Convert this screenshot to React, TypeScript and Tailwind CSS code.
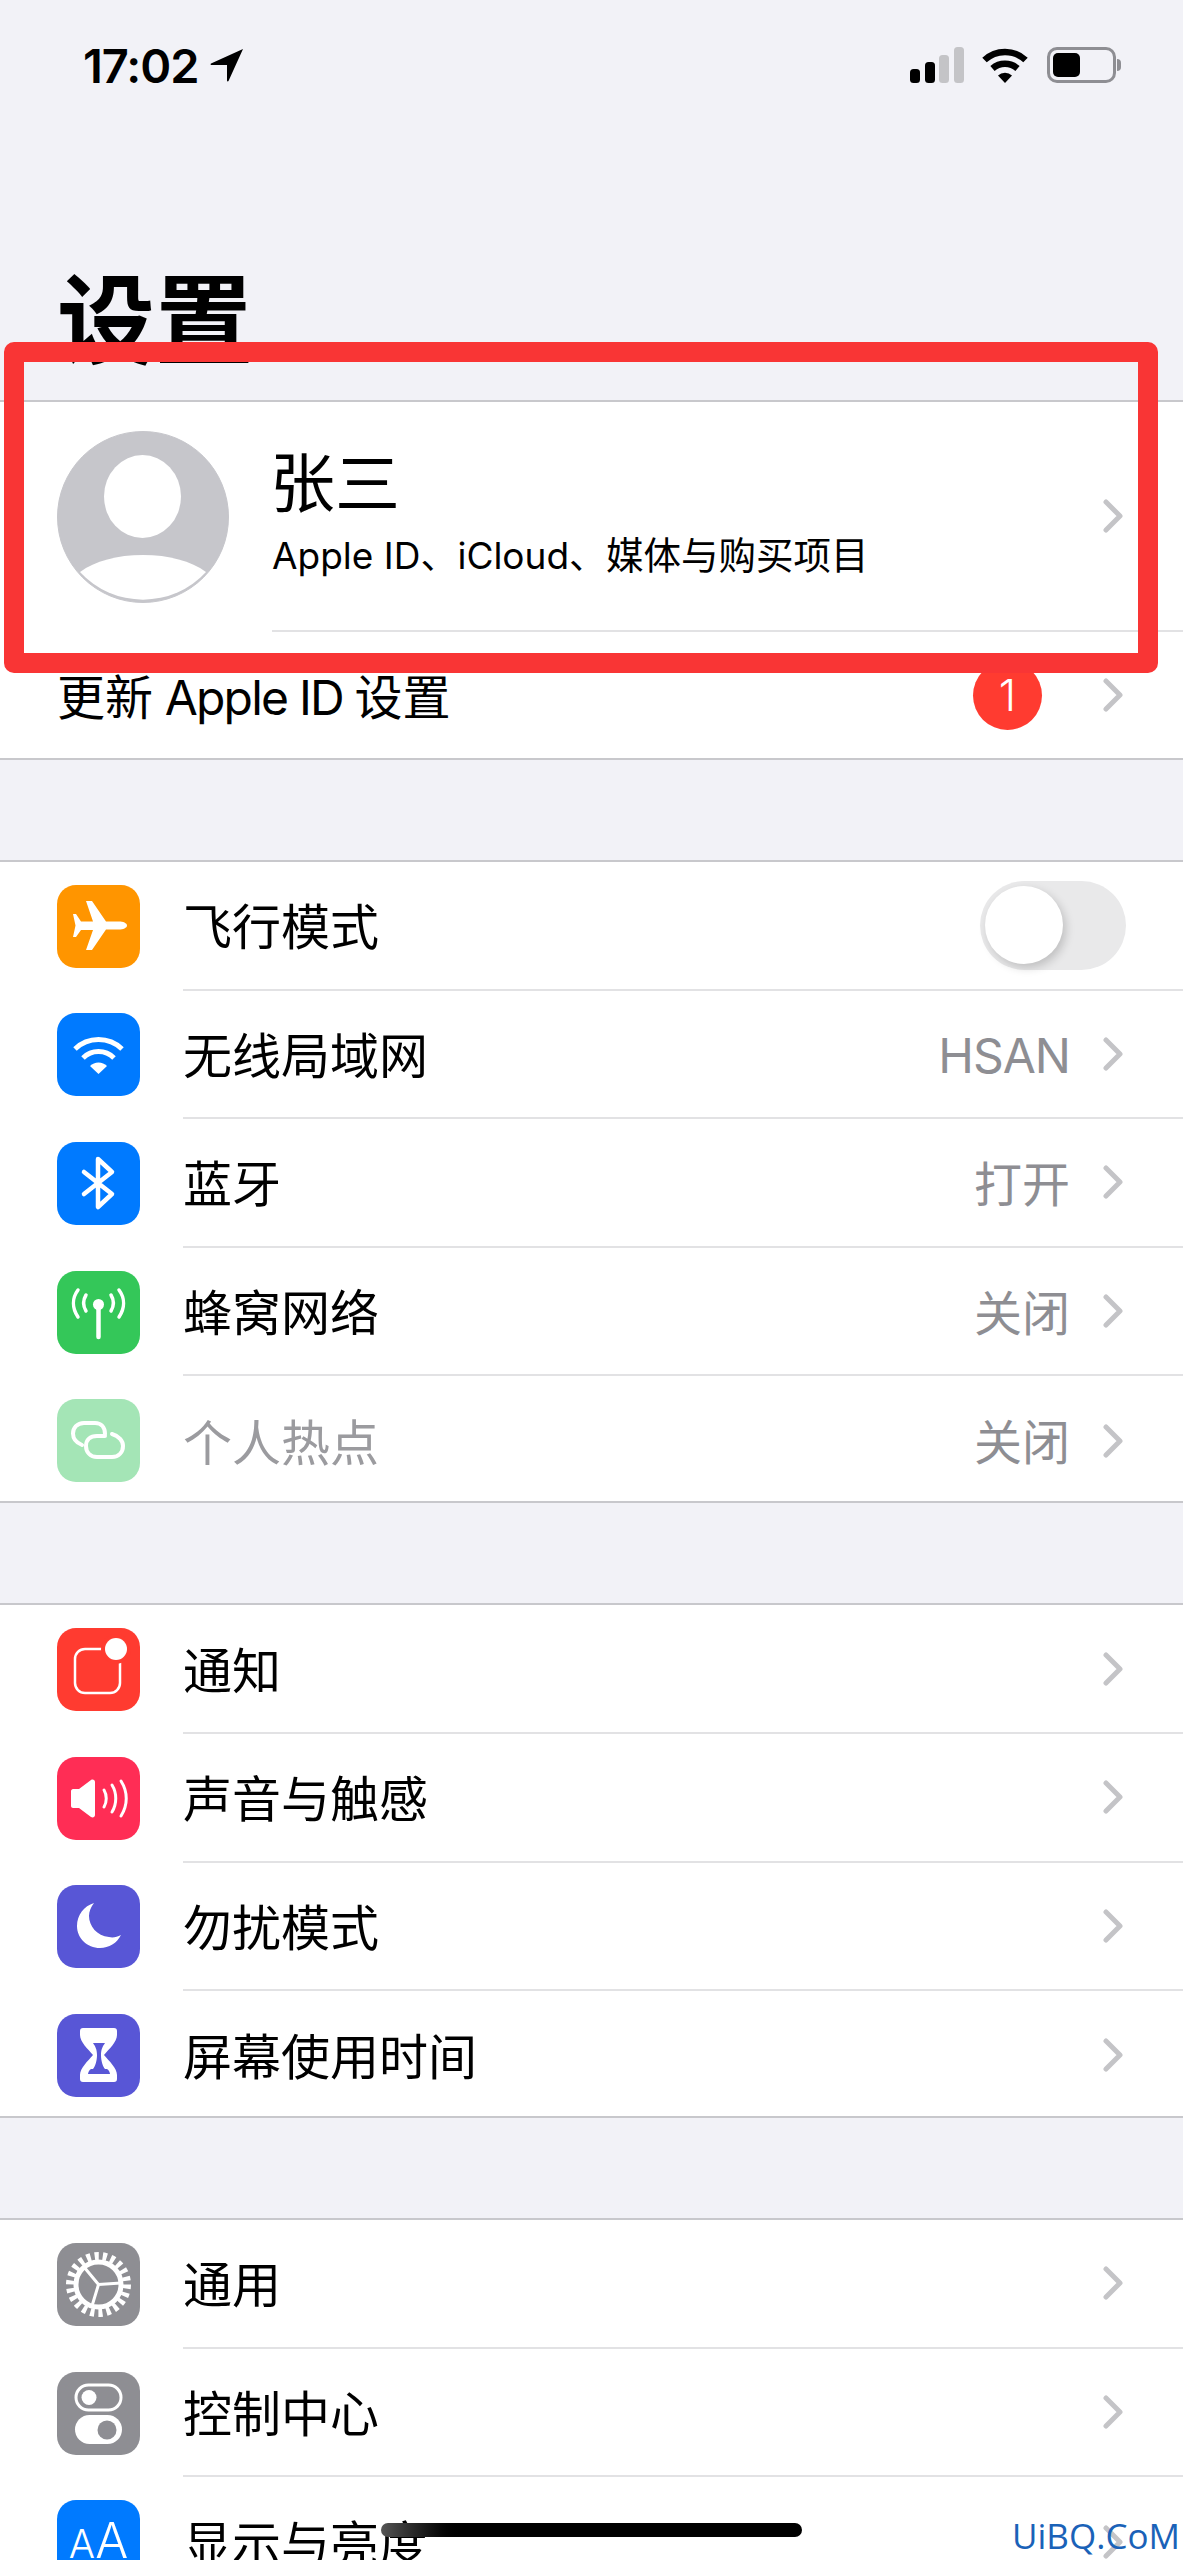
import type { ReactNode } from "react";

function Chevron({ wide }: { wide?: boolean }) {
  return (
    <svg width="20" height="34" viewBox="0 0 20 34" className={wide ? "ml-[61px]" : "ml-[33px]"}>
      <path d="M3 3l14 14L3 31" fill="none" stroke="#c4c4c7" strokeWidth="5" strokeLinecap="round" strokeLinejoin="round" />
    </svg>
  );
}

function IconBox({ color, children }: { color: string; children: ReactNode }) {
  return (
    <div className={`h-[83px] w-[83px] shrink-0 overflow-hidden rounded-[19px] ${color}`}>
      <svg width="83" height="83" viewBox="0 0 83 83">
        {children}
      </svg>
    </div>
  );
}

function Row({
  icon,
  label,
  value,
  last,
  dim,
  right,
}: {
  icon: ReactNode;
  label: string;
  value?: string;
  last?: boolean;
  dim?: boolean;
  right?: ReactNode;
}) {
  return (
    <div className={last ? "h-[125px]" : "h-[128.6px]"}>
      <div className="flex h-[128.6px] items-center pl-[57px]">
        {icon}
        <div className={`ml-[43px] flex h-full flex-1 items-center pr-[60px] ${last ? "" : "border-b-2 border-[#e2e2e4]"}`}>
          <span className={`flex-1 pt-[5px] text-[49px] leading-none ${dim ? "text-[#9b9b9f]" : "text-black"}`}>{label}</span>
          {right ?? (
            <>
              {value && (
                <span className={`pt-[5px] text-[48px] leading-none text-[#8e8e93] ${value === "HSAN" ? "tracking-[-1px]" : ""}`}>{value}</span>
              )}
              <Chevron />
            </>
          )}
        </div>
      </div>
    </div>
  );
}

function Group({ children }: { children: ReactNode }) {
  return (
    <div className="mt-[100px] border-y-2 border-[#c8c8cc] bg-white">
      {children}
    </div>
  );
}

const white = { fill: "none", stroke: "#fff", strokeLinecap: "round" as const };

export default function App() {
  return (
    <div className="relative h-[2560px] w-[1183px] overflow-hidden bg-[#f2f2f7] font-['Inter','Noto_Sans_CJK_SC',sans-serif]">
      {/* status bar + title */}
      <div className="h-[400px] pt-[44px]">
        <div className="flex h-[42px] items-center pl-[83px] pr-[62px]">
          <span className="text-[47px] font-semibold leading-none tracking-[-1px] text-black">17:02</span>
          <svg width="34" height="34" viewBox="0 0 34 34" className="ml-[11px]">
            <path d="M33 1L1 15.5c-.8.4-.5 1.500.4 1.500H17v15.600c0 .9 1.100 1.200 1.500.4L33 1z" fill="#000" />
          </svg>
          <div className="flex-1" />
          <svg width="54" height="36" viewBox="0 0 54 36">
            <rect x="0" y="22" width="10" height="14" rx="3.5" fill="#000" />
            <rect x="15" y="15" width="10" height="21" rx="3.5" fill="#000" />
            <rect x="29" y="8" width="10" height="28" rx="3.5" fill="#c4c4c7" />
            <rect x="44" y="0" width="10" height="36" rx="3.5" fill="#c4c4c7" />
          </svg>
          <svg width="46" height="36" viewBox="0 0 46 36" className="ml-[18px]">
            <path d="M2.500 13a30 30 0 0 1 41 0" fill="none" stroke="#000" strokeWidth="6.5" />
            <path d="M10.500 21.500a19 19 0 0 1 25 0" fill="none" stroke="#000" strokeWidth="6.5" />
            <path d="M16 28.500a10 10 0 0 1 14 0L23 36z" fill="#000" />
          </svg>
          <div className="ml-[19px] flex items-center">
            <div className="h-[36px] w-[69px] rounded-[10px] border-[3px] border-[#8e8e93] p-[3px]">
              <div className="h-full w-[27px] rounded-[5px] bg-black" />
            </div>
            <div className="ml-[1px] h-[12px] w-[4px] rounded-r-full bg-[#8e8e93]" />
          </div>
        </div>
        <h1 className="ml-[57px] mt-[186px] text-[98px] font-bold leading-[98px] text-black">设置</h1>
      </div>

      {/* apple id */}
      <div className="border-y-2 border-[#c8c8cc] bg-white">
        <div className="flex h-[230px] items-center pl-[57px]">
          <svg width="172" height="172" viewBox="0 0 172 172" className="shrink-0">
            <circle cx="86" cy="86" r="85.5" fill="#c6c6cb" />
            <ellipse cx="85.500" cy="65.500" rx="38.500" ry="41.500" fill="#fff" />
            <path d="M23 141C38 130 60 124 86 124s48 6 63 17A85.500 85.500 0 0 1 23 141z" fill="#fff" />
            <circle cx="86" cy="86" r="85.5" fill="none" stroke="#c6c6cb" strokeWidth="1" />
          </svg>
          <div className="ml-[43px] flex h-full flex-1 items-center border-b-2 border-[#e2e2e4] pr-[60px]">
            <div className="flex-1 pb-[7px]">
              <div className="ml-[-2px] text-[65px] leading-[72px] text-black">张三</div>
              <div className="mt-[14px] text-[37px] leading-[44px] text-black">
                Apple ID、iCloud、<span className="text-[37.500px]">媒体与购买项目</span>
              </div>
            </div>
            <Chevron />
          </div>
        </div>
        <div className="flex h-[126px] items-center pl-[57px] pr-[60px]">
          <span className="flex-1 pt-[5px] text-[48px] leading-none text-black">
            更新<span className="tracking-[-1.800px]"> Apple ID </span>设置
          </span>
          <span className="flex h-[69px] w-[69px] items-center justify-center rounded-full bg-[#ff3b30] text-[44px] font-light leading-none text-white">1</span>
          <Chevron wide />
        </div>
      </div>

      <Group>
        <Row
          label="飞行模式"
          icon={
            <IconBox color="bg-[#ff9500]">
              <path d="M70 40.5c0-2.5-4-4-8-4H49L35 16h-6l7 20.5H24L19 29h-3l2.5 11.5L16 52h3l5-7h12l-7 20h6l14-20.5h13c4 0 8-1.500 8-4z" fill="#fff" />
            </IconBox>
          }
          right={
            <div className="relative mr-[-3px] h-[89px] w-[146px] rounded-full bg-[#e9e9ea]">
              <div className="absolute left-[5px] top-[5px] h-[78px] w-[78px] rounded-full bg-white shadow-[3px_4px_10px_rgba(0,0,0,0.18)]" />
            </div>
          }
        />
        <Row
          label="无线局域网"
          value="HSAN"
          icon={
            <IconBox color="bg-[#007aff]">
              <path d="M18 36a34 34 0 0 1 47 0" fill="none" stroke="#fff" strokeWidth="5" />
              <path d="M26 45a22 22 0 0 1 31 0" fill="none" stroke="#fff" strokeWidth="5" />
              <path d="M33 53a12 12 0 0 1 17 0l-8.500 8z" fill="#fff" />
            </IconBox>
          }
        />
        <Row
          label="蓝牙"
          value="打开"
          icon={
            <IconBox color="bg-[#007aff]">
              <path d="M27 30l28 22-14 13V17l14 13-28 22" {...white} strokeWidth="4.5" strokeLinejoin="round" />
            </IconBox>
          }
        />
        <Row
          label="蜂窝网络"
          value="关闭"
          icon={
            <IconBox color="bg-[#34c759]">
              <circle cx="41.5" cy="33.500" r="5.500" fill="#fff" />
              <path d="M41.500 36v30" {...white} strokeWidth="4.500" />
              <path d="M21 19c-6 8-6 18 0 27M29 24c-3 5-3 11 0 16M62 19c6 8 6 18 0 27M54 24c3 5 3 11 0 16" {...white} strokeWidth="3.500" />
            </IconBox>
          }
        />
        <Row
          last
          dim
          label="个人热点"
          value="关闭"
          icon={
            <IconBox color="bg-[#a4e5b6]">
              <path d="M48 35c0-7-4-11-10-11H27c-7 0-11 5-11 10.500S20 44 25 46" {...white} strokeWidth="4" />
              <path d="M55 35c7 2 11 7 11 12 0 6-4 11-11 11H40c-7 0-11-5-11-11s4-10 11-10h8" {...white} strokeWidth="4" />
            </IconBox>
          }
        />
      </Group>

      <Group>
        <Row
          label="通知"
          icon={
            <IconBox color="bg-[#ff3b30]">
              <rect x="18" y="21" width="45" height="44" rx="10" {...white} strokeWidth="2.500" />
              <circle cx="59" cy="21" r="15" fill="#ff3b30" />
              <circle cx="59" cy="21" r="11" fill="#fff" />
            </IconBox>
          }
        />
        <Row
          label="声音与触感"
          icon={
            <IconBox color="bg-[#ff2d55]">
              <path d="M14 34c0-1 1-2 2-2h6l12-9c2-1 4 0 4 2v33c0 2-2 3-4 2l-12-9h-6c-1 0-2-1-2-2V34z" fill="#fff" />
              <path d="M47 33c3 5 3 12 0 17M55 28c5 8 5 19 0 27M64 24c7 11 7 24 0 35" {...white} strokeWidth="3" />
            </IconBox>
          }
        />
        <Row
          label="勿扰模式"
          icon={
            <IconBox color="bg-[#5856d6]">
              <path d="M37 18C27 21 20 30 20 41c0 12 10 22 23 22 9 0 17-5 21-13-4 2-8 3-12 2-12-1-20-11-20-21 0-5 2-9 5-13z" fill="#fff" />
            </IconBox>
          }
        />
        <Row
          last
          label="屏幕使用时间"
          icon={
            <IconBox color="bg-[#5856d6]">
              <path d="M26 14h31c2 0 3 1 3 3v4c0 7-8 14-13 20 5 6 13 13 13 20v4c0 2-1 3-3 3H26c-2 0-3-1-3-3v-4c0-7 8-14 13-20-5-6-13-13-13-20v-4c0-2 1-3 3-3z" fill="#fff" />
              <path d="M36 29h12c-2 3-4 6-4 12s2 12 4 14h2c2 1 3 4 3 5H31c0-1 1-4 3-5h2c2-2 4-8 4-14s-2-9-4-12z" fill="#5856d6" />
            </IconBox>
          }
        />
      </Group>

      <Group>
        <Row
          label="通用"
          icon={
            <IconBox color="bg-[#8e8e93]">
              <circle cx="41.500" cy="41.500" r="28.500" fill="none" stroke="#fff" strokeWidth="8" strokeDasharray="4.100 4.040" />
              <circle cx="41.500" cy="41.500" r="22.500" fill="none" stroke="#fff" strokeWidth="5" />
              <path d="M41.500 41.500L27 24M41.500 41.500L64 40M41.500 41.500L35 63" {...white} strokeWidth="3" />
            </IconBox>
          }
        />
        <Row
          label="控制中心"
          icon={
            <IconBox color="bg-[#8e8e93]">
              <rect x="19" y="13" width="45" height="25" rx="12.500" {...white} strokeWidth="3" />
              <circle cx="32" cy="25.500" r="7.500" fill="#fff" />
              <rect x="18" y="43" width="47" height="29" rx="14.500" fill="#fff" />
              <circle cx="50" cy="58" r="9.500" fill="#8e8e93" />
            </IconBox>
          }
        />
        <Row
          last
          label="显示与亮度"
          icon={
            <div className="flex h-[83px] w-[83px] shrink-0 items-baseline justify-center rounded-[19px] bg-[#007aff] pt-[14px] text-[49px] font-light leading-[54px] text-white">
              <span className="text-[39px]">A</span>
              <span>A</span>
            </div>
          }
        />
      </Group>

      {/* annotation, home bar and watermark sit over the list */}
      <div className="absolute left-[4px] top-[342px] h-[331px] w-[1154px] rounded-[10px] border-[20px] border-[#f93535]" />
      <div className="absolute left-[381px] top-[2523px] h-[14px] w-[421px] rounded-full bg-gradient-to-r from-[#555] via-black via-[20%] to-black" />
      <div className="absolute left-[1012px] top-[2516px] font-['Open_Sans',sans-serif] text-[35px] leading-[40px] text-[#1a62b8]">UiBQ.CoM</div>
    </div>
  );
}
